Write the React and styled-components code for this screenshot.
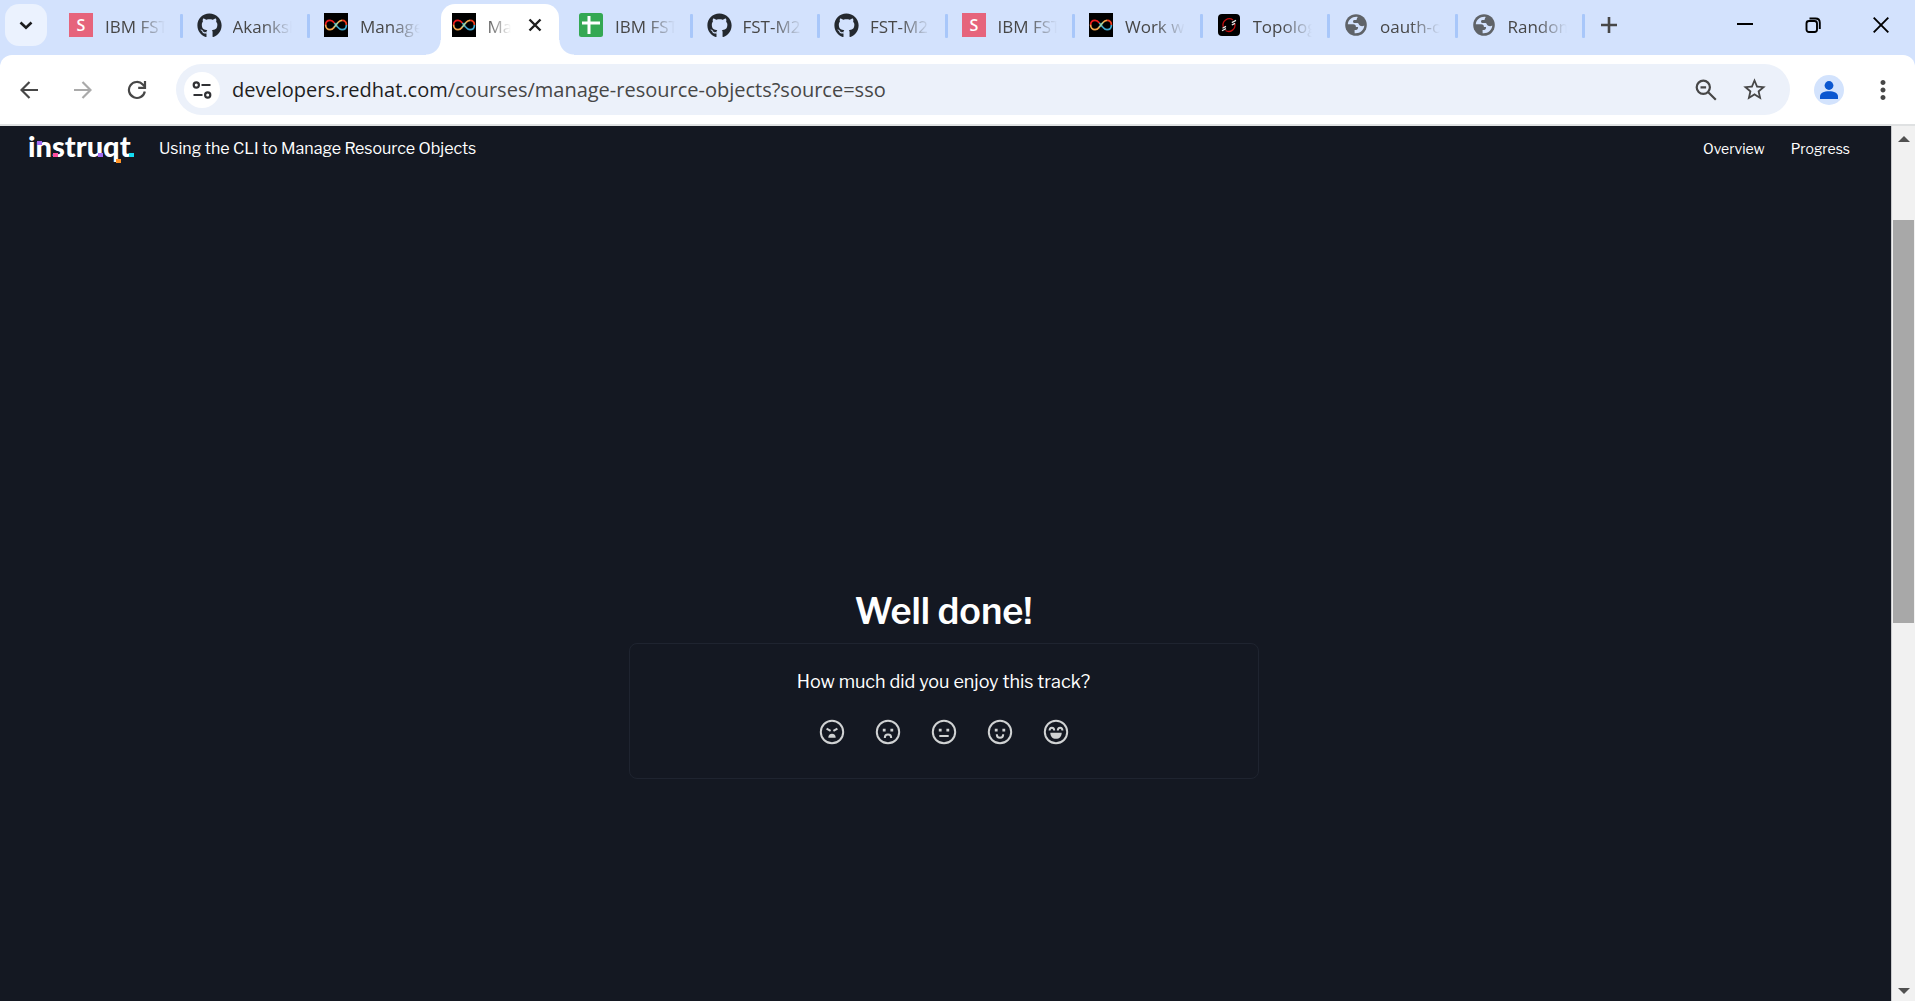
import React from "react";
import styled, { createGlobalStyle, css } from "styled-components";
import { FaGithub } from "react-icons/fa";
import { MdStarBorder, MdMoreVert } from "react-icons/md";

const chromeFont = `"Segoe UI", "Open Sans", "Noto Sans", sans-serif`;
const pageFont = `"Libre Franklin", Inter, "Liberation Sans", sans-serif`;

const GlobalStyle = createGlobalStyle`
  *, *::before, *::after { box-sizing: border-box; }
  body { margin: 0; background: #141822; font-family: ${pageFont}; }
  button { margin: 0; padding: 0; border: 0; background: none; color: inherit; font: inherit; cursor: pointer; }
  svg { display: block; }
`;

const Window = styled.div`
  display: flex;
  flex-direction: column;
  height: 100vh;
  overflow: hidden;
`;

/* ---------- tab strip ---------- */

const TabStrip = styled.header`
  display: flex;
  height: 55px;
  flex: none;
  background: #d3e2fd;
  font-family: ${chromeFont};
`;

const TabSearch = styled.button`
  display: grid;
  place-items: center;
  flex: none;
  width: 42px;
  height: 42px;
  margin: 4px 8px 0 5px;
  border-radius: 14px;
  background: #ebf2fe;
  color: #1b1c1e;
`;

const Tabs = styled.div`
  display: grid;
  grid-template-columns: repeat(12, minmax(0, 1fr));
  flex: 1;
  padding-top: 4px;
`;

const TabItem = styled.div`
  position: relative;
  display: flex;
  align-items: flex-start;
  height: 51px;
  padding: 9px 18px 0 14px;
  ${(p) =>
    p.$divider &&
    css`
      &::after {
        content: "";
        position: absolute;
        right: 0;
        top: 10px;
        width: 3px;
        height: 24px;
        border-radius: 1px;
        background: #a8c7fa;
      }
    `}
  ${(p) =>
    p.$active &&
    css`
      margin: 0 6px 0 3px;
      padding: 9px 12px 0 11px;
      border-radius: 14px 14px 0 0;
      background: #fff;
      &::before,
      &::after {
        content: "";
        position: absolute;
        bottom: 0;
        width: 15px;
        height: 15px;
      }
      &::before {
        right: 100%;
        background: radial-gradient(circle at 0 0, transparent 14px, #fff 15px);
      }
      &::after {
        left: 100%;
        background: radial-gradient(circle at 100% 0, transparent 14px, #fff 15px);
      }
    `}
`;

const Favicon = styled.span`
  display: grid;
  place-items: center;
  flex: none;
  width: 24px;
  height: 24px;
  margin-right: 12px;
  color: #24292f;
`;

const TabTitle = styled.button`
  flex: 1;
  min-width: 0;
  height: 28px;
  overflow: hidden;
  white-space: nowrap;
  text-align: left;
  font-size: 17px;
  line-height: 28px;
  color: ${(p) => (p.$active ? "#1f1f1f" : "#474747")};
  mask-image: linear-gradient(to right, #000 calc(100% - 30px), transparent);
`;

const CloseTab = styled.button`
  display: grid;
  place-items: center;
  flex: none;
  width: 24px;
  height: 24px;
  margin-left: 12px;
  color: #1f1f1f;
`;

const NewTab = styled.button`
  display: grid;
  place-items: center;
  width: 48px;
  height: 50px;
  color: #474747;
`;

const WindowControls = styled.div`
  display: flex;
  justify-content: space-between;
  flex: none;
  width: 330px;
`;

const ControlGroup = styled.div`
  display: flex;
`;

const WindowButton = styled.button`
  display: grid;
  place-items: center;
  width: 68px;
  height: 50px;
  color: #000;
`;

/* ---------- toolbar ---------- */

const ToolbarWrap = styled.div`
  flex: none;
  background: #d3e2fd;
`;

const Toolbar = styled.div`
  display: flex;
  align-items: center;
  height: 71px;
  padding: 0 5px 0 2px;
  border-bottom: 2px solid #dfe1e2;
  border-radius: 12px 12px 0 0;
  background: #fff;
  font-family: ${chromeFont};
`;

const ToolButton = styled.button`
  display: grid;
  place-items: center;
  flex: none;
  width: ${(p) => p.$width || 54}px;
  height: 48px;
  color: ${(p) => p.$color || "#474747"};
`;

const Omnibox = styled.div`
  display: flex;
  align-items: center;
  flex: 1;
  height: 51px;
  margin: 0 12px;
  padding: 0 12px 0 8px;
  border-radius: 26px;
  background: #ecf1fa;
`;

const SiteChip = styled.button`
  display: grid;
  place-items: center;
  flex: none;
  width: 36px;
  height: 36px;
  border-radius: 50%;
  background: #fff;
  color: #303134;
`;

const Url = styled.div`
  flex: 1;
  margin-left: 12px;
  font-size: 20px;
  line-height: 28px;
  color: #474747;
  white-space: nowrap;
`;

const Host = styled.span`
  color: #1f1f1f;
`;

const Avatar = styled.span`
  display: grid;
  place-items: center;
  width: 30px;
  height: 30px;
  border-radius: 50%;
  background: #d3e3fd;
  color: #0b57d0;
`;

/* ---------- page ---------- */

const Viewport = styled.div`
  display: flex;
  flex: 1;
  min-height: 0;
`;

const Page = styled.div`
  display: flex;
  flex-direction: column;
  flex: 1;
  background: #141822;
  color: #fff;
`;

const PageHeader = styled.div`
  display: flex;
  align-items: center;
  height: 46px;
  padding: 0 41px 0 28px;
`;

const Logo = styled.a`
  position: relative;
  width: 107px;
  height: 32px;
  color: #fff;
  font: 900 29px/26px Lato, sans-serif;
  text-decoration: none;
`;

const Accent = styled.i`
  position: absolute;
  left: ${(p) => p.$x}px;
  top: ${(p) => p.$y}px;
  width: 5px;
  height: 4px;
  background: ${(p) => p.$color};
`;

const TrackName = styled.h1`
  flex: 1;
  margin: 0 0 0 24px;
  font-size: 16px;
  font-weight: 400;
  line-height: 24px;
`;

const NavLink = styled.a`
  margin-left: 26px;
  font-size: 14px;
  line-height: 24px;
  color: #fff;
  text-decoration: none;
`;

const Main = styled.main`
  display: flex;
  flex-direction: column;
  align-items: center;
  justify-content: center;
  flex: 1;
  padding: 222px 4px 30px 0;
`;

const Heading = styled.h2`
  margin: 0;
  font-size: 36px;
  font-weight: 600;
  line-height: 48px;
`;

const Card = styled.section`
  display: flex;
  flex-direction: column;
  align-items: center;
  width: 100%;
  max-width: 630px;
  margin-top: 8px;
  padding: 24px 24px 22px;
  border: 1px solid #1f2430;
  border-radius: 8px;
`;

const Question = styled.p`
  margin: 0;
  font-size: 18px;
  line-height: 28px;
`;

const Ratings = styled.div`
  display: flex;
  margin-top: 12px;
`;

const Rating = styled.button`
  display: grid;
  place-items: center;
  width: 56px;
  height: 48px;
  color: #d0d2d3;
`;

/* ---------- scrollbar ---------- */

const Scrollbar = styled.div`
  display: flex;
  flex-direction: column;
  align-items: center;
  flex: none;
  width: 24px;
  border-left: 1px solid #c9cacc;
  background: #f1f1f1;
`;

const ScrollArrow = styled.button`
  display: grid;
  place-items: center;
  flex: none;
  width: 22px;
  height: ${(p) => p.$height}px;
  color: #505050;
`;

const ScrollTrack = styled.div`
  flex: 1;
  width: 21px;
  padding-top: 68px;
`;

const Thumb = styled.div`
  height: 53%;
  background: #a8a8a8;
`;

/* ---------- drawings ---------- */

const Line = ({ size, box, width = 2, height, children, ...rest }) => (
  <svg
    width={size}
    height={height || size}
    viewBox={box || `0 0 ${size} ${height || size}`}
    fill="none"
    stroke="currentColor"
    strokeWidth={width}
    aria-hidden="true"
    {...rest}
  >
    {children}
  </svg>
);

const Study = () => (
  <svg width="24" height="24" viewBox="0 0 24 24" aria-hidden="true">
    <rect width="24" height="24" fill="#e6647c" />
    <text x="12" y="18" textAnchor="middle" fill="#fff" fontFamily="Open Sans, sans-serif" fontSize="16" fontWeight="600">
      S
    </text>
  </svg>
);

const Infinity = () => (
  <svg width="24" height="24" viewBox="0 0 24 24" fill="none" strokeWidth="1.7" aria-hidden="true">
    <rect width="24" height="24" fill="#000" />
    <path d="M1.6 12.2C1.6 9 3.6 7.300 6 7.300c2 0 3.200 1 4.400 2.600" stroke="#ee1c1c" />
    <path d="M1.600 11.800C1.600 14.800 3.600 16.600 6 16.600c1.900 0 3.200-1 4.400-2.500" stroke="#f3a64b" />
    <path d="M13.700 9.700C15 8.200 16.100 7.300 18 7.300" stroke="#f3a64b" />
    <path d="M18 7.300c2.400 0 4.400 1.700 4.400 4.700" stroke="#ee3a1c" />
    <path d="M13.600 14c1.300 1.600 2.500 2.600 4.400 2.600 2.400 0 4.400-1.700 4.400-4.700" stroke="#3fa9cf" />
    <path d="M10.400 9.900l3.200 4.100" stroke="#4fb0c8" />
    <path d="M10.200 14.300l3.700-4.800" stroke="#a8d5a0" />
  </svg>
);

const Sheet = () => (
  <svg width="24" height="24" viewBox="0 0 24 24" aria-hidden="true">
    <rect width="24" height="24" rx="2.500" fill="#34a853" />
    <path d="M3 10h18M10 3v18" stroke="#fff" strokeWidth="3" />
  </svg>
);

const OpenShift = () => (
  <svg width="24" height="24" viewBox="0 0 24 24" fill="none" aria-hidden="true">
    <rect x="1" y="1" width="22" height="22" rx="4" fill="#000" />
    <path d="M6.300 14A6.300 6.300 0 0 1 16 7M17.800 10.500A6.300 6.300 0 0 1 8.500 17.500" stroke="#c40f0f" strokeWidth="1.300" />
    <path d="M14.800 9.600l4.200-2.200M14.800 12l3.200-1.600M5.500 15.200l3.500-1.800M5 17.700l4-2.100" stroke="#e8e8e8" strokeWidth="1.200" />
  </svg>
);

const Globe = () => (
  <svg width="24" height="24" viewBox="0 0 24 24" aria-hidden="true">
    <circle cx="12" cy="12" r="10.800" fill="#5f6368" />
    <path
      fill="#d3e2fd"
      d="M12.500 3.700C7.800 3.700 4 7 3.800 11.300h5.400c2 0 2.700 1 2.700 2.700h2.200c0 2.300-1 3.100-3.500 3.100v3.100c5.300.6 9.400-3 9.700-7.700-1.300 1-2.800 1-4.200.3-1.300-.6-1.200-2.700-2.700-2.700h-2.800c-2 0-2-2.700-.4-3h1.800c1.300 0 .4-2.400 2.100-3.100z"
    />
  </svg>
);

const favicons = {
  study: <Study />,
  github: <FaGithub size={25} />,
  infinity: <Infinity />,
  sheet: <Sheet />,
  openshift: <OpenShift />,
  globe: <Globe />,
};

const tabs = [
  { icon: "study", title: "IBM FST" },
  { icon: "github", title: "Akanksh" },
  { icon: "infinity", title: "Manage", last: true },
  { icon: "infinity", title: "Man", active: true },
  { icon: "sheet", title: "IBM FST" },
  { icon: "github", title: "FST-M2" },
  { icon: "github", title: "FST-M2" },
  { icon: "study", title: "IBM FST" },
  { icon: "infinity", title: "Work wi" },
  { icon: "openshift", title: "Topolog" },
  { icon: "globe", title: "oauth-o" },
  { icon: "globe", title: "Random" },
];

const Face = ({ children }) => (
  <svg width="26" height="26" viewBox="0 0 26 26" fill="none" stroke="currentColor" strokeWidth="2" aria-hidden="true">
    <circle cx="13" cy="13" r="11.200" />
    {children}
  </svg>
);

const Eyes = () => <path d="M7.800 11.200h2.800M15.400 11.200h2.800" strokeWidth="2.800" />;

const faces = [
  {
    label: "Terrible",
    art: (
      <>
        <path d="M7.600 9.600l4 2.300M18.400 9.600l-4 2.300" />
        <path d="M9.300 18.800c0-2.600 1.500-4 3.700-4s3.700 1.400 3.700 4z" fill="currentColor" stroke="none" />
      </>
    ),
  },
  {
    label: "Bad",
    art: (
      <>
        <Eyes />
        <path d="M9.800 19c0-2.400 1.300-3.400 3.200-3.400s3.200 1 3.200 3.400" />
      </>
    ),
  },
  {
    label: "Okay",
    art: (
      <>
        <Eyes />
        <path d="M8.300 17h9.400" />
      </>
    ),
  },
  {
    label: "Good",
    art: (
      <>
        <Eyes />
        <path d="M9.800 15.200c0 2.400 1.300 3.500 3.200 3.500s3.200-1.100 3.200-3.500" />
      </>
    ),
  },
  {
    label: "Great",
    art: (
      <>
        <path d="M6.600 11.600c0-2 .8-2.900 2.300-2.900s2.300.9 2.300 2.900M14.800 11.600c0-2 .8-2.900 2.300-2.900s2.300.9 2.300 2.900" />
        <path d="M7.300 13.700h11.400c0 3.700-2.300 6.100-5.700 6.100s-5.700-2.400-5.700-6.100z" fill="currentColor" stroke="none" />
      </>
    ),
  },
];

export default function App() {
  return (
    <>
      <GlobalStyle />
      <Window>
        <TabStrip>
          <TabSearch aria-label="Search tabs">
            <Line size={14} width={2.6}>
              <path d="M1.500 4.500L7 9.800l5.500-5.300" />
            </Line>
          </TabSearch>
          <Tabs>
            {tabs.map((tab, i) => (
              <TabItem key={i} $active={tab.active} $divider={!tab.active && !tab.last}>
                <Favicon>{favicons[tab.icon]}</Favicon>
                <TabTitle $active={tab.active}>{tab.title}</TabTitle>
                {tab.active && (
                  <CloseTab aria-label="Close tab">
                    <Line size={14} width={2.4}>
                      <path d="M1.500 1.500l11 11M12.500 1.500l-11 11" />
                    </Line>
                  </CloseTab>
                )}
              </TabItem>
            ))}
          </Tabs>
          <WindowControls>
            <NewTab aria-label="New tab">
              <Line size={16} width={2.6}>
                <path d="M8 0v16M0 8h16" />
              </Line>
            </NewTab>
            <ControlGroup>
              <WindowButton aria-label="Minimise">
                <Line size={16}>
                  <path d="M0 7h16" />
                </Line>
              </WindowButton>
              <WindowButton aria-label="Restore">
                <Line size={16} width={1.9}>
                  <rect x="1.500" y="4" width="10.500" height="11" rx="2.500" />
                  <path d="M4.500 1.500h6c2.500 0 4.300 1.600 4.300 4.200v6.300" />
                </Line>
              </WindowButton>
              <WindowButton aria-label="Close">
                <Line size={16} width={1.9}>
                  <path d="M.7.7l14.600 14.600M15.300.7L.7 15.300" />
                </Line>
              </WindowButton>
            </ControlGroup>
          </WindowControls>
        </TabStrip>

        <ToolbarWrap>
          <Toolbar>
            <ToolButton aria-label="Back">
              <Line size={18} width={2.2}>
                <path d="M18 9H1.800M9.500 1L1.500 9l8 8" />
              </Line>
            </ToolButton>
            <ToolButton aria-label="Forward" $color="#aaaaaa">
              <Line size={18} width={2.2}>
                <path d="M0 9h16.200M8.500 1l8 8-8 8" />
              </Line>
            </ToolButton>
            <ToolButton aria-label="Reload">
              <Line size={20} width={2.2}>
                <path d="M17.800 11.500A8 8 0 1 1 15.800 4.500L18 6.800" />
                <path d="M18 1v6.800h-6.800" />
              </Line>
            </ToolButton>
            <Omnibox>
              <SiteChip aria-label="View site information">
                <Line size={20} height={18} width={2.2}>
                  <circle cx="4.300" cy="4" r="2.600" />
                  <path d="M9.500 4h9M1.500 14h9" />
                  <circle cx="15.700" cy="14" r="2.600" />
                </Line>
              </SiteChip>
              <Url>
                <Host>developers.redhat.com</Host>/courses/manage-resource-objects?source=sso
              </Url>
              <ToolButton aria-label="Zoom" $width={48}>
                <Line size={22} width={2.2}>
                  <circle cx="8.300" cy="8.300" r="6.600" />
                  <path d="M13 13l7.800 7.800M5.500 8.300h5.600" />
                </Line>
              </ToolButton>
              <ToolButton aria-label="Bookmark this tab" $width={48}>
                <MdStarBorder size={27} />
              </ToolButton>
            </Omnibox>
            <ToolButton aria-label="Profile">
              <Avatar>
                <Line size={18} fill="currentColor" stroke="none">
                  <circle cx="9" cy="4.500" r="4.400" />
                  <path d="M0 18v-2.500c0-3.500 4-5.200 9-5.200s9 1.700 9 5.200V18z" />
                </Line>
              </Avatar>
            </ToolButton>
            <ToolButton aria-label="Menu">
              <MdMoreVert size={30} />
            </ToolButton>
          </Toolbar>
        </ToolbarWrap>

        <Viewport>
          <Page>
            <PageHeader>
              <Logo href="#home">
                instruqt
                <Accent $x={9} $y={8} $color="#a36bf0" />
                <Accent $x={25} $y={20} $color="#ff4fa0" />
                <Accent $x={70} $y={20} $color="#a36bf0" />
                <Accent $x={88} $y={26} $color="#ff9326" />
                <Accent $x={101} $y={20} $color="#13dcf2" />
              </Logo>
              <TrackName>Using the CLI to Manage Resource Objects</TrackName>
              <nav>
                <NavLink href="#overview">Overview</NavLink>
                <NavLink href="#progress">Progress</NavLink>
              </nav>
            </PageHeader>
            <Main>
              <Heading>Well done!</Heading>
              <Card>
                <Question>How much did you enjoy this track?</Question>
                <Ratings>
                  {faces.map((face) => (
                    <Rating key={face.label} aria-label={face.label}>
                      <Face>{face.art}</Face>
                    </Rating>
                  ))}
                </Ratings>
              </Card>
            </Main>
          </Page>
          <Scrollbar aria-hidden="true">
            <ScrollArrow $height={26} tabIndex={-1}>
              <svg width="12" height="6" viewBox="0 0 12 6" fill="currentColor">
                <path d="M0 6l6-6 6 6z" />
              </svg>
            </ScrollArrow>
            <ScrollTrack>
              <Thumb />
            </ScrollTrack>
            <ScrollArrow $height={20} tabIndex={-1}>
              <svg width="12" height="6" viewBox="0 0 12 6" fill="currentColor">
                <path d="M0 0l6 6 6-6z" />
              </svg>
            </ScrollArrow>
          </Scrollbar>
        </Viewport>
      </Window>
    </>
  );
}
